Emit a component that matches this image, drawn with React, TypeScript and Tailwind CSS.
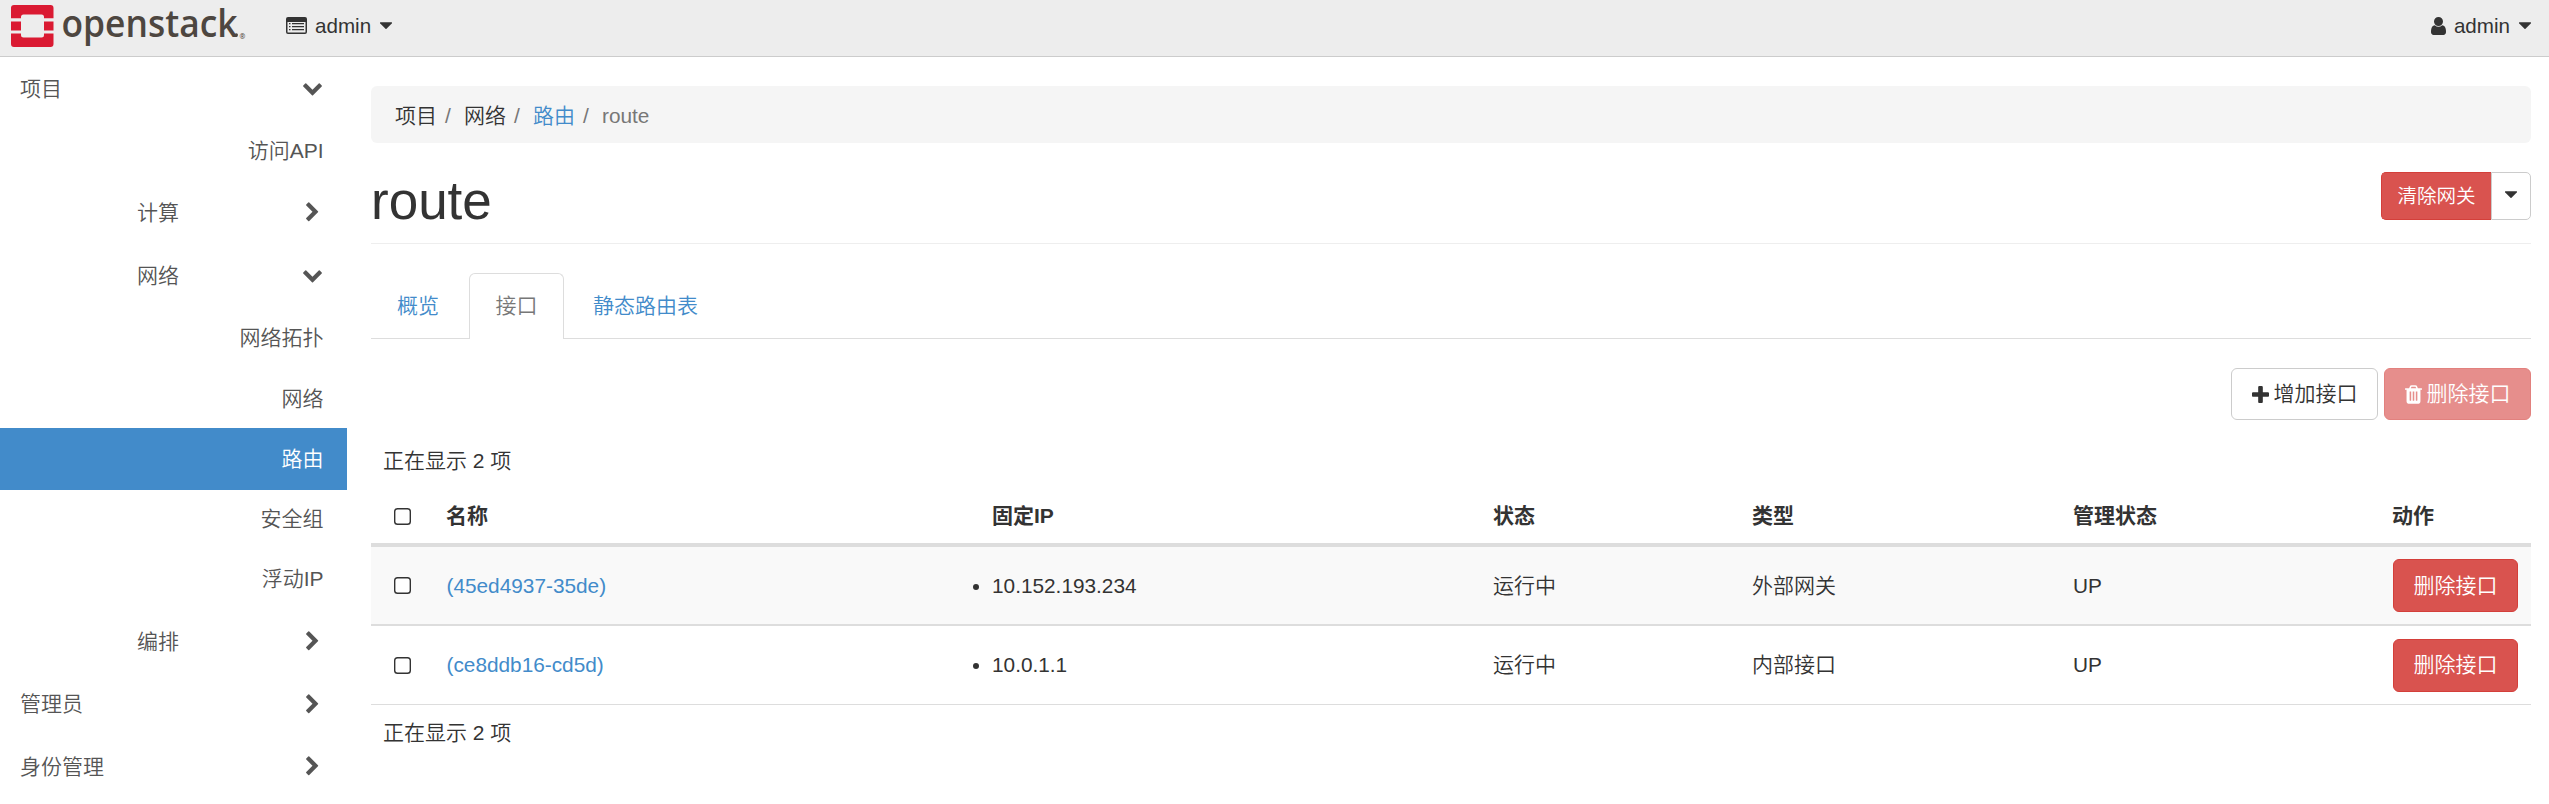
import React from "react";

type IconProps = { className: string; viewBox: string; d: string };

function Icon({ className, viewBox, d }: IconProps) {
  return (
    <svg className={`shrink-0 fill-current ${className}`} viewBox={viewBox} aria-hidden="true">
      <path d={d} />
    </svg>
  );
}

const Caret = () => (
  <Icon
    className="h-[7px] w-[12px]"
    viewBox="384 640 1024 576"
    d="M1408 704q0 26-19 45l-448 448q-19 19-45 19t-45-19l-448-448q-19-19-19-45t19-45 45-19h896q26 0 45 19t19 45z"
  />
);

const ChevronRight = () => (
  <Icon
    className="h-[21px] w-[21px]"
    viewBox="0 0 1792 1792"
    d="M1363 877l-742 742q-19 19-45 19t-45-19l-166-166q-19-19-19-45t19-45l531-531-531-531q-19-19-19-45t19-45l166-166q19-19 45-19t45 19l742 742q19 19 19 45t-19 45z"
  />
);

const ChevronDown = () => (
  <Icon
    className="mb-[3px] h-[21px] w-[21px]"
    viewBox="0 0 1792 1792"
    d="M1683 808l-742 741q-19 19-45 19t-45-19l-742-741q-19-19-19-45.5t19-45.5l166-165q19-19 45-19t45 19l531 531 531-531q19-19 45-19t45 19l166 165q19 19 19 45.5t-19 45.5z"
  />
);

const ListAlt = () => (
  <svg className="h-[17px] w-[21px] shrink-0 fill-current" viewBox="0 0 21 17" aria-hidden="true">
    <path
      fillRule="evenodd"
      d="M2 0h17a2 2 0 0 1 2 2v13a2 2 0 0 1-2 2H2a2 2 0 0 1-2-2V2a2 2 0 0 1 2-2zM1.5 5v10q0 .5.5.5h17q.5 0 .5-.5V5z"
    />
    <path d="M3 6h1.5v1.3H3zM3 9h1.5v1.3H3zM3 12h1.5v1.3H3zM6 6h12v1.3H6zM6 9h12v1.3H6zM6 12h12v1.3H6z" />
  </svg>
);

const User = () => (
  <Icon
    className="h-[18px] w-[17px]"
    viewBox="256 128 1280 1536"
    d="M1536 1399q0 109-62.5 187t-150.5 78h-854q-88 0-150.5-78t-62.5-187q0-85 8.5-160.5t31.5-152 58.5-131 94-89 134.500-34.5q131 128 313 128t313-128q76 0 134.500 34.5t94 89 58.5 131 31.5 152 8.5 160.5zm-256-887q0 159-112.5 271.5t-271.5 112.5-271.5-112.5-112.5-271.5 112.5-271.5 271.5-112.5 271.5 112.5 112.5 271.5z"
  />
);

const Plus = () => (
  <Icon
    className="h-[17px] w-[17px]"
    viewBox="192 128 1408 1408"
    d="M1600 736v192q0 40-28 68t-68 28h-416v416q0 40-28 68t-68 28h-192q-40 0-68-28t-28-68v-416h-416q-40 0-68-28t-28-68v-192q0-40 28-68t68-28h416v-416q0-40 28-68t68-28h192q40 0 68 28t28 68v416h416q40 0 68 28t28 68z"
  />
);

const Trash = () => (
  <Icon
    className="h-[19px] w-[17px]"
    viewBox="192 128 1408 1536"
    d="M704 1376v-704q0-14-9-23t-23-9h-64q-14 0-23 9t-9 23v704q0 14 9 23t23 9h64q14 0 23-9t9-23zm256 0v-704q0-14-9-23t-23-9h-64q-14 0-23 9t-9 23v704q0 14 9 23t23 9h64q14 0 23-9t9-23zm256 0v-704q0-14-9-23t-23-9h-64q-14 0-23 9t-9 23v704q0 14 9 23t23 9h64q14 0 23-9t9-23zm-544-992h448l-48-117q-7-9-17-11h-317q-10 2-17 11zm928 32v64q0 14-9 23t-23 9h-96v948q0 83-47 143.5t-113 60.5h-832q-66 0-113-58.5t-47-141.5v-952h-96q-14 0-23-9t-9-23v-64q0-14 9-23t23-9h309l70-167q15-37 54-63t79-26h320q40 0 79 26t54 63l70 167h309q14 0 23 9t9 23z"
  />
);

function Logo() {
  return (
    <svg className="h-[56px] w-[250px] shrink-0" viewBox="0 0 250 56" aria-label="openstack">
      <g fill="#da1a32">
        <path d="M14 5h36.500a3 3 0 0 1 3 3v10.200H44V17a2.500 2.500 0 0 0-2.500-2.500h-18A2.500 2.500 0 0 0 21 17v1.200H11V8a3 3 0 0 1 3-3z" />
        <path d="M11 21.500h10v9H11zM44 21.500h9.500v9H44z" />
        <path d="M11 33.500h10V35a2.500 2.500 0 0 0 2.500 2.500h18A2.500 2.500 0 0 0 44 35v-1.500h9.500V44a3 3 0 0 1-3 3H14a3 3 0 0 1-3-3z" />
      </g>
      <text
        x="61.500"
        y="36.500"
        fill="#4d4640"
        fontFamily="Open Sans, sans-serif"
        fontSize="38.500"
        fontWeight="600"
        textLength="176"
        lengthAdjust="spacingAndGlyphs"
      >
        openstack
      </text>
      <circle cx="236.300" cy="35" r="1.700" fill="#4d4640" />
      <text x="239.500" y="38.500" fill="#4d4640" fontFamily="Open Sans, sans-serif" fontSize="7" fontWeight="600">
        ®
      </text>
    </svg>
  );
}

type NavItem = {
  label: string;
  level: 1 | 2 | 3;
  size: string;
  open?: boolean;
  active?: boolean;
};

const nav: NavItem[] = [
  { label: "项目", level: 1, size: "h-[63px]", open: true },
  { label: "访问API", level: 3, size: "h-[61px]" },
  { label: "计算", level: 2, size: "h-[63px]" },
  { label: "网络", level: 2, size: "h-[63px]", open: true },
  { label: "网络拓扑", level: 3, size: "h-[62px]" },
  { label: "网络", level: 3, size: "h-[59px]" },
  { label: "路由", level: 3, size: "h-[62px]", active: true },
  { label: "安全组", level: 3, size: "h-[58px]" },
  { label: "浮动IP", level: 3, size: "h-[62px]" },
  { label: "编排", level: 2, size: "h-[63px]" },
  { label: "管理员", level: 1, size: "h-[62px]" },
  { label: "身份管理", level: 1, size: "h-[63px]" },
];

function Sidebar() {
  return (
    <nav className="w-[347px] shrink-0 text-[#555]">
      {nav.map((item, i) =>
        item.level === 3 ? (
          <a
            key={i}
            className={`flex items-center justify-end pr-[23.500px] ${item.size} ${item.active ? "bg-[#428bca] text-white" : ""}`}
          >
            {item.label}
          </a>
        ) : (
          <a
            key={i}
            className={`flex items-center justify-between pr-6 ${item.size} ${item.level === 1 ? "pl-5" : "pl-[137px]"}`}
          >
            {item.label}
            {item.open ? <ChevronDown /> : <ChevronRight />}
          </a>
        ),
      )}
    </nav>
  );
}

const Checkbox = () => (
  <input
    type="checkbox"
    className="block h-[17px] w-[17px] appearance-none rounded-[3.500px] bg-white shadow-[inset_0_0_0_1.400px_#333]"
  />
);

const cols = "grid grid-cols-[63px_546px_501px_259px_321px_319px_151px] items-center";

const rows = [
  { name: "(45ed4937-35de)", ip: "10.152.193.234", kind: "外部网关", size: "h-[79px] bg-[#f9f9f9] border-b-2" },
  { name: "(ce8ddb16-cd5d)", ip: "10.0.1.1", kind: "内部接口", size: "h-[79px] border-b" },
];

function InterfaceTable() {
  return (
    <div>
      <div className={`${cols} h-[62px] border-b-4 border-[#ddd] pt-1 font-bold`}>
        <div className="pl-[23px]">
          <Checkbox />
        </div>
        {["名称", "固定IP", "状态", "类型", "管理状态", "动作"].map((h) => (
          <div key={h} className="pl-3">
            {h}
          </div>
        ))}
      </div>
      {rows.map((r) => (
        <div key={r.name} className={`${cols} border-[#ddd] ${r.size}`}>
          <div className="pl-[23px]">
            <Checkbox />
          </div>
          <div className="pl-[12.500px] text-[20.800px] text-[#428bca]">{r.name}</div>
          <div className="flex items-center text-[20.800px]">
            <span className="mt-0.5 -ml-[7px] mr-[13px] h-1.5 w-1.5 rounded-full bg-[#333]" />
            {r.ip}
          </div>
          <div className="pl-3">运行中</div>
          <div className="pl-3">{r.kind}</div>
          <div className="pl-3 text-[20.800px]">UP</div>
          <div className="pl-[13px]">
            <button className="flex h-[53px] w-[125px] items-center justify-center rounded-md border border-[#d43f3a] bg-[#d9534f] text-white">
              删除接口
            </button>
          </div>
        </div>
      ))}
    </div>
  );
}

export default function App() {
  return (
    <div className="h-[804px] w-[2549px] overflow-hidden bg-white font-['Liberation_Sans','Noto_Sans_CJK_SC',sans-serif] text-[21px] leading-[30px] font-[350] text-[#333]">
      <header className="flex h-[57px] items-start border-b border-[#ccc] bg-[#ededed] text-[20.600px]">
        <Logo />
        <div className="ml-9 flex h-[51px] items-center">
          <ListAlt />
          <span className="mr-[9px] ml-2">admin</span>
          <Caret />
        </div>
        <div className="mr-[18px] ml-auto flex h-[51px] items-center">
          <User />
          <span className="mr-[9px] ml-[7px]">admin</span>
          <Caret />
        </div>
      </header>
      <div className="flex">
        <Sidebar />
        <main className="ml-6 w-[2160px] pt-[29px]">
          <ol className="flex h-[57px] items-center rounded-md bg-[#f5f5f5] pt-0.5 pl-6">
            <li>项目</li>
            <li className="w-[27px] pl-2 text-[#777]">/</li>
            <li>网络</li>
            <li className="w-[27px] pl-2 text-[#777]">/</li>
            <li className="text-[#428bca]">路由</li>
            <li className="w-[27px] pl-2 text-[#777]">/</li>
            <li className="text-[20.800px] text-[#777]">route</li>
          </ol>
          <div className="flex h-[101px] justify-between border-b border-[#eee] pt-[29px]">
            <h1 className="-mt-px text-[53px] leading-[59px]">route</h1>
            <div className="flex h-12 text-[19.500px]">
              <button className="flex w-[110px] items-center justify-center rounded-l-[5px] border border-r-0 border-[#d43f3a] bg-[#d9534f] text-white">
                清除网关
              </button>
              <button className="flex w-10 items-center justify-center rounded-r-[5px] border border-[#ccc] bg-white pb-1">
                <Caret />
              </button>
            </div>
          </div>
          <ul className="mt-[29px] flex h-[66px] border-b border-[#ddd]">
            <li className="flex w-[98px] items-center pl-[26px] text-[#428bca]">概览</li>
            <li className="-mb-px flex w-[95px] items-center justify-center rounded-t-md border border-b-0 border-[#ddd] bg-white pb-px text-[#777]">
              接口
            </li>
            <li className="flex items-center pl-[29px] text-[#428bca]">静态路由表</li>
          </ul>
          <div className="mt-[29px] flex justify-end gap-1.5">
            <button className="flex h-[52px] w-[147px] items-center justify-center gap-[5px] rounded-md border border-[#ccc] bg-white">
              <Plus />
              增加接口
            </button>
            <button className="flex h-[52px] w-[147px] items-center justify-center gap-[5px] rounded-md border border-[#d43f3a] bg-[#d9534f] text-white opacity-65">
              <Trash />
              删除接口
            </button>
          </div>
          <div className="mt-[26px] mb-[9px] pl-3">正在显示 2 项</div>
          <InterfaceTable />
          <div className="mt-[13px] pl-3">正在显示 2 项</div>
        </main>
      </div>
    </div>
  );
}
